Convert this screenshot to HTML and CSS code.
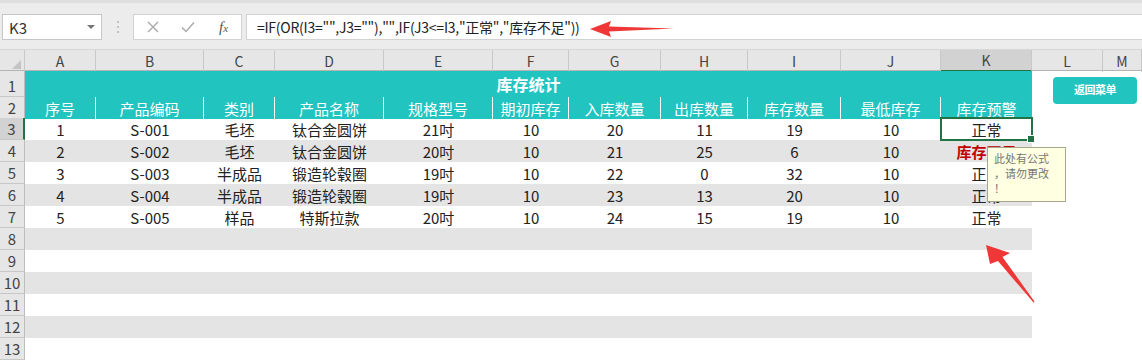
FILE: index.html
```html
<!DOCTYPE html>
<html lang="zh-CN">
<head>
    <meta charset="UTF-8">
    <title>库存统计</title>
    <link rel="stylesheet" href="styles.css">
</head>
<body>
    <div class="topbar">
        <div class="namebox"><span>K3</span><span class="caret"></span></div>
        <div class="grip">
            <svg width="4" height="14" viewBox="0 0 4 14"><circle cx="2" cy="2" r="1" fill="#b4b4b4"/><circle cx="2" cy="7" r="1" fill="#b4b4b4"/><circle cx="2" cy="12" r="1" fill="#b4b4b4"/></svg>
        </div>
        <div class="tools">
            <svg class="tool" width="12" height="12" viewBox="0 0 12 12"><path d="M1 1L11 11M11 1L1 11" stroke="#a8a8a8" stroke-width="1.4"/></svg>
            <svg class="tool" width="14" height="12" viewBox="0 0 14 12"><path d="M1 6.5L5 10.5L13 1.5" stroke="#a8a8a8" stroke-width="1.4" fill="none"/></svg>
            <span class="fx">f<span>x</span></span>
        </div>
        <div class="formula">=IF(OR(I3="",J3=""),"",IF(J3&lt;=I3,"正常","库存不足"))</div>
    </div>

    <div class="sheet">
        <div class="row colhead">
            <div class="corner"><svg width="9" height="9" viewBox="0 0 9 9"><path d="M9 0V9H0Z" fill="#c4c4c4"/></svg></div>
            <div>A</div><div>B</div><div>C</div><div>D</div><div>E</div><div>F</div>
            <div>G</div><div>H</div><div>I</div><div>J</div><div class="cur">K</div><div>L</div><div>M</div>
        </div>

        <div class="row r1">
            <div class="rh">1</div>
            <div class="title">库存统计</div>
        </div>

        <div class="row r2">
            <div class="rh">2</div>
            <div class="h">序号</div><div class="h">产品编码</div><div class="h">类别</div><div class="h">产品名称</div>
            <div class="h">规格型号</div><div class="h">期初库存</div><div class="h">入库数量</div><div class="h">出库数量</div>
            <div class="h">库存数量</div><div class="h">最低库存</div><div class="h last">库存预警</div>
        </div>

        <div class="row data">
            <div class="rh cur">3</div>
            <div>1</div><div>S-001</div><div>毛坯</div><div>钛合金圆饼</div><div>21吋</div><div>10</div>
            <div>20</div><div>11</div><div>19</div><div>10</div><div class="sel">正常</div>
        </div>
        <div class="row data alt">
            <div class="rh">4</div>
            <div>2</div><div>S-002</div><div>毛坯</div><div>钛合金圆饼</div><div>20吋</div><div>10</div>
            <div>21</div><div>25</div><div>6</div><div>10</div><div class="warn">库存不足</div>
        </div>
        <div class="row data">
            <div class="rh">5</div>
            <div>3</div><div>S-003</div><div>半成品</div><div>锻造轮毂圈</div><div>19吋</div><div>10</div>
            <div>22</div><div>0</div><div>32</div><div>10</div><div>正常</div>
        </div>
        <div class="row data alt">
            <div class="rh">6</div>
            <div>4</div><div>S-004</div><div>半成品</div><div>锻造轮毂圈</div><div>19吋</div><div>10</div>
            <div>23</div><div>13</div><div>20</div><div>10</div><div>正常</div>
        </div>
        <div class="row data">
            <div class="rh">7</div>
            <div>5</div><div>S-005</div><div>样品</div><div>特斯拉款</div><div>20吋</div><div>10</div>
            <div>24</div><div>15</div><div>19</div><div>10</div><div>正常</div>
        </div>

        <div class="row empty alt"><div class="rh">8</div><div class="fill"></div></div>
        <div class="row empty"><div class="rh">9</div><div class="fill"></div></div>
        <div class="row empty alt"><div class="rh">10</div><div class="fill"></div></div>
        <div class="row empty"><div class="rh">11</div><div class="fill"></div></div>
        <div class="row empty alt"><div class="rh">12</div><div class="fill"></div></div>
        <div class="row empty"><div class="rh">13</div><div class="fill"></div></div>

        <button class="menu-btn">返回菜单</button>
    </div>

    <div class="comment">此处有公式<br>，请勿更改<br>！</div>

    <svg class="arrows" width="1142" height="360" viewBox="0 0 1142 360">
        <polygon points="590,29 611,21 609,26.5 674,28.5 609,31.5 611,37" fill="#ef3737"/>
        <polygon points="986,245 1010,253 1002.5,257 1034.5,301.5 1033.5,302.5 998,261 990,264" fill="#ef3737"/>
    </svg>
</body>
</html>
```

FILE: styles.css
```css
* {
    box-sizing: border-box;
}
body {
    margin: 0;
    width: 1142px;
    height: 360px;
    overflow: hidden;
    position: relative;
    background: #fff;
    font-family: "Noto Sans CJK SC", sans-serif;
    --cols: 25px 71px 108px 71px 109px 109px 76px 92px 87px 93px 100px 91px 71px 39px;
    --teal: #22c4bf;
}

/* formula bar */
.topbar {
    height: 50px;
    background: #ececec;
    border-top: 3px solid #dedede;
    padding-top: 11px;
    display: flex;
    align-items: flex-start;
    border-bottom: 1px solid #d6d6d6;
}
.namebox {
    margin-left: 2px;
    width: 100px;
    height: 26px;
    background: #fff;
    border: 1px solid #c6c6c6;
    display: flex;
    align-items: center;
    justify-content: space-between;
    padding: 0 6px;
    font-size: 15px;
    color: #333;
}
.caret {
    width: 0;
    height: 0;
    border-left: 4px solid transparent;
    border-right: 4px solid transparent;
    border-top: 4px solid #777;
}
.grip {
    width: 31px;
    height: 26px;
    display: flex;
    align-items: center;
    justify-content: center;
}
.tools {
    width: 109px;
    height: 26px;
    background: #fff;
    border: 1px solid #d2d2d2;
    display: flex;
    align-items: center;
    padding-left: 13px;
    gap: 22px;
}
.fx {
    font-family: "Liberation Serif", serif;
    font-style: italic;
    font-size: 15px;
    color: #555;
    margin-left: 2px;
}
.fx span {
    font-size: 11px;
}
.formula {
    flex: 1;
    margin-left: 4px;
    height: 26px;
    background: #fff;
    border: 1px solid #d2d2d2;
    border-right: none;
    padding-left: 10px;
    font-size: 14px;
    letter-spacing: -0.25px;
    line-height: 24px;
    color: #222;
    white-space: nowrap;
}

/* sheet */
.sheet {
    position: relative;
}
.row {
    display: grid;
    grid-template-columns: var(--cols);
    height: 22px;
}
.row > div {
    display: flex;
    align-items: center;
    justify-content: center;
    font-size: 15px;
    color: #222;
}
.colhead {
    height: 21px;
    background: #e6e6e6;
    border-bottom: 1px solid #b4b4b4;
}
.colhead > div {
    border-right: 1px solid #c8c8c8;
    font-size: 14px;
    color: #444;
}
.colhead .corner {
    justify-content: flex-end;
    align-items: flex-end;
    padding: 0 3px 3px 0;
}
.colhead .cur {
    background: #d2d2d2;
    border-bottom: 2px solid #217346;
}
.row > .rh {
    grid-column: 1;
    background: #e6e6e6;
    border-right: 1px solid #bdbdbd;
    border-bottom: 1px solid #c8c8c8;
    font-size: 15px;
    color: #444;
    align-items: flex-end;
    padding-bottom: 0;
}
.row > .rh.cur {
    background: #d2d2d2;
    border-right: 2px solid #217346;
}
.r1 {
    height: 26px;
}
.r2 {
    height: 21px;
}
.row > .title {
    grid-column: span 11;
    background: var(--teal);
    color: #fff;
    font-weight: bold;
    font-size: 16px;
}
.row > .h {
    background: var(--teal);
    color: #fff;
    border-right: 1px solid #fff;
}
.row > .h.last {
    border-right: none;
}
.row > .fill {
    grid-column: span 11;
}
.alt > div:nth-child(n+2):nth-child(-n+12) {
    background: #e4e4e4;
}
.row > .warn {
    color: #c00000;
    font-weight: bold;
}
.row > .sel {
    position: relative;
}
.sel::after {
    content: "";
    position: absolute;
    inset: -1px;
    border: 2px solid #217346;
}
.sel::before {
    content: "";
    position: absolute;
    right: -3px;
    bottom: -3px;
    width: 6px;
    height: 6px;
    background: #217346;
    border: 1px solid #fff;
    z-index: 1;
}

/* floating shapes */
.menu-btn {
    position: absolute;
    left: 1053px;
    top: 27px;
    width: 84px;
    height: 27px;
    border: none;
    border-radius: 4px;
    background: var(--teal);
    color: #fff;
    font-family: "Noto Sans CJK SC", sans-serif;
    font-size: 11px;
    font-weight: bold;
    letter-spacing: -0.5px;
    padding: 0 0 3px;
}
.comment {
    position: absolute;
    left: 987px;
    top: 147px;
    width: 79px;
    height: 55px;
    background: #ffffe1;
    border: 1px solid #a6a68c;
    padding: 3px 0 0 6px;
    font-size: 11px;
    line-height: 15px;
    color: #777;
}
.arrows {
    position: absolute;
    left: 0;
    top: 0;
    pointer-events: none;
}
```
